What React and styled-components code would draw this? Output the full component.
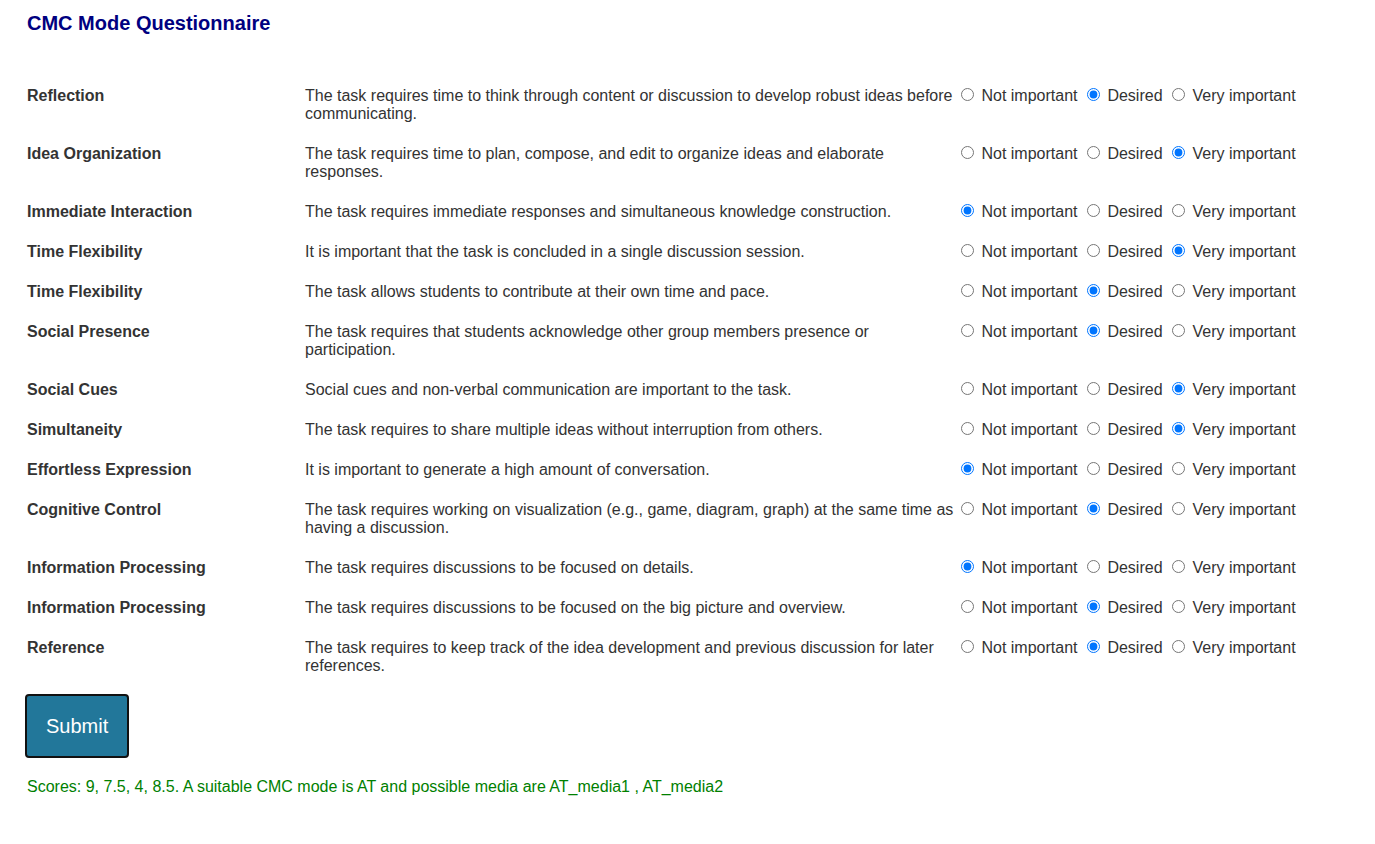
import React from "react";
import styled, { createGlobalStyle } from "styled-components";

const GlobalStyle = createGlobalStyle`
  html, body {
    margin: 0;
    padding: 0;
    background: #ffffff;
  }
  body {
    font-family: "Liberation Sans", Arial, sans-serif;
  }
`;

const Page = styled.main`
  padding: 12px 0 40px 27px;
  font-family: "Liberation Sans", Arial, sans-serif;
  color: #333333;
`;

const Title = styled.h1`
  margin: 0;
  font-size: 20px;
  line-height: 23px;
  font-weight: bold;
  color: #000080;
`;

const Form = styled.form`
  margin: 0;
`;

const Grid = styled.div`
  margin-top: 52px;
  display: grid;
  grid-template-columns: 278px 651px auto;
  row-gap: 22px;
  align-items: start;
  font-size: 16px;
  line-height: 18px;
`;

const Label = styled.div`
  font-weight: bold;
  color: #333333;
`;

const Description = styled.div`
  color: #333333;
`;

const Options = styled.div`
  color: #333333;
  white-space: nowrap;
`;

const Radio = styled.input.attrs({ type: "radio" })`
  width: 13px;
  height: 13px;
  margin: 0 3px 0 5px;
  vertical-align: baseline;
`;

const SubmitButton = styled.button`
  margin: 19px 0 0 -2px;
  padding: 18px 19px;
  font-family: "Liberation Sans", Arial, sans-serif;
  font-size: 20px;
  line-height: 24px;
  color: #ffffff;
  background: #22779a;
  border: 2px solid #111111;
  border-radius: 4px;
  cursor: pointer;
`;

const Scores = styled.p`
  margin: 20px 0 0;
  font-size: 16px;
  line-height: 18px;
  color: #008000;
`;

const OPTIONS = ["Not important", "Desired", "Very important"];

const ROWS = [
  ["Reflection", "The task requires time to think through content or discussion to develop robust ideas before communicating.", 1],
  ["Idea Organization", "The task requires time to plan, compose, and edit to organize ideas and elaborate responses.", 2],
  ["Immediate Interaction", "The task requires immediate responses and simultaneous knowledge construction.", 0],
  ["Time Flexibility", "It is important that the task is concluded in a single discussion session.", 2],
  ["Time Flexibility", "The task allows students to contribute at their own time and pace.", 1],
  ["Social Presence", "The task requires that students acknowledge other group members presence or participation.", 1],
  ["Social Cues", "Social cues and non-verbal communication are important to the task.", 2],
  ["Simultaneity", "The task requires to share multiple ideas without interruption from others.", 2],
  ["Effortless Expression", "It is important to generate a high amount of conversation.", 0],
  ["Cognitive Control", "The task requires working on visualization (e.g., game, diagram, graph) at the same time as having a discussion.", 1],
  ["Information Processing", "The task requires discussions to be focused on details.", 0],
  ["Information Processing", "The task requires discussions to be focused on the big picture and overview.", 1],
  ["Reference", "The task requires to keep track of the idea development and previous discussion for later references.", 1],
];

function Row({ index, label, text, initial }) {
  const [value, setValue] = React.useState(initial);
  return (
    <>
      <Label>{label}</Label>
      <Description>{text}</Description>
      <Options>
        {OPTIONS.map((opt, i) => (
          <React.Fragment key={opt}>
            <Radio
              name={`q${index}`}
              value={i}
              checked={value === i}
              onChange={() => setValue(i)}
            />
            {" "}
            {opt}
            {" "}
          </React.Fragment>
        ))}
      </Options>
    </>
  );
}

export default function App() {
  return (
    <>
      <GlobalStyle />
      <Page>
        <Title>CMC Mode Questionnaire</Title>
        <Form onSubmit={(e) => e.preventDefault()}>
          <Grid>
            {ROWS.map(([label, text, initial], i) => (
              <Row key={i} index={i} label={label} text={text} initial={initial} />
            ))}
          </Grid>
          <SubmitButton type="submit">Submit</SubmitButton>
        </Form>
        <Scores>
          Scores: 9, 7.5, 4, 8.5. A suitable CMC mode is AT and possible media are AT_media1 , AT_media2
        </Scores>
      </Page>
    </>
  );
}
